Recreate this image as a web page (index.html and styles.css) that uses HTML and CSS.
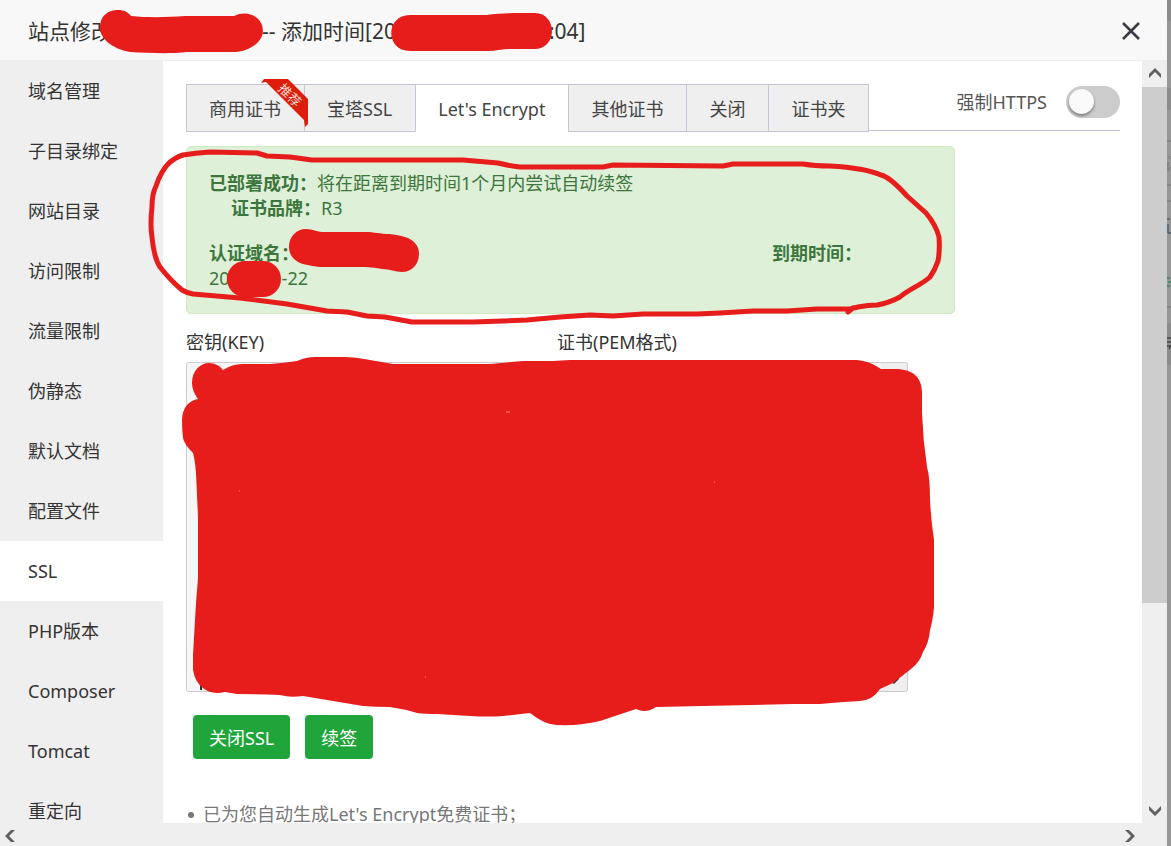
FILE: index.html
```html
<!DOCTYPE html>
<html lang="zh-CN">
<head>
    <meta charset="UTF-8">
    <meta name="viewport" content="width=device-width, initial-scale=1.0">
    <title>站点修改</title>
    <link rel="stylesheet" href="styles.css">
</head>
<body>
    <div class="dialog">
        <header class="dialog-header">
            <h1 class="dialog-title">站点修改<span class="hidden-domain"></span>-- 添加时间[20<span class="hidden-time"></span>:04]</h1>
            <button class="close" type="button" aria-label="关闭">
                <svg width="18" height="18" viewBox="0 0 18 18"><path d="M1 1L17 17M17 1L1 17" stroke="#3b3a48" stroke-width="2.6"/></svg>
            </button>
        </header>

        <div class="dialog-body">
            <nav class="side-menu">
                <a href="#">域名管理</a>
                <a href="#">子目录绑定</a>
                <a href="#">网站目录</a>
                <a href="#">访问限制</a>
                <a href="#">流量限制</a>
                <a href="#">伪静态</a>
                <a href="#">默认文档</a>
                <a href="#">配置文件</a>
                <a href="#" class="active">SSL</a>
                <a href="#">PHP版本</a>
                <a href="#">Composer</a>
                <a href="#">Tomcat</a>
                <a href="#">重定向</a>
            </nav>

            <main class="content">
                <div class="tabs">
                    <button class="tab" type="button">商用证书
                        <!-- 推荐角标 -->
                        <svg class="ribbon" width="48" height="50" viewBox="0 0 48 50">
                            <path d="M0 5L3 1H27L47 21V46L44 49L43 42L5 4Z" fill="#dc1e0a"/>
                            <text x="29" y="22" transform="rotate(45 29 17)" text-anchor="middle">推荐</text>
                        </svg>
                    </button>
                    <button class="tab" type="button">宝塔SSL</button>
                    <button class="tab active" type="button">Let's Encrypt</button>
                    <button class="tab" type="button">其他证书</button>
                    <button class="tab" type="button">关闭</button>
                    <button class="tab" type="button">证书夹</button>
                    <label class="force-https">强制HTTPS
                        <input type="checkbox" class="switch">
                    </label>
                </div>

                <div class="alert">
                    <p><b>已部署成功：</b>将在距离到期时间1个月内尝试自动续签</p>
                    <p class="brand"><b>证书品牌：</b>R3</p>
                    <p class="cert-row"><b>认证域名：</b><b class="expire">到期时间：</b></p>
                    <p>20<span class="hidden-date"></span>-22</p>
                </div>

                <div class="keys">
                    <div class="key-field">
                        <label for="key">密钥(KEY)</label>
                        <textarea id="key" readonly></textarea>
                    </div>
                    <div class="key-field">
                        <label for="pem">证书(PEM格式)</label>
                        <textarea id="pem" readonly></textarea>
                    </div>
                </div>

                <div class="actions">
                    <button class="btn" type="button">关闭SSL</button>
                    <button class="btn" type="button">续签</button>
                </div>

                <ul class="help">
                    <li>已为您自动生成Let's Encrypt免费证书；</li>
                </ul>
            </main>

            <div class="scroll-y">
                <svg class="arrow" width="25" height="26" viewBox="0 0 25 26"><path d="M7 13L13 7L19 13V17L13 11L7 17Z" fill="#606060"/></svg>
                <div class="thumb"></div>
                <div class="track"></div>
                <svg class="arrow" width="25" height="26" viewBox="0 0 25 26"><path d="M7 9L13 15L19 9V13L13 19L7 13Z" fill="#606060"/></svg>
            </div>
        </div>

        <div class="scroll-x">
            <svg width="18" height="23" viewBox="0 0 18 23"><path d="M11 7H15L9 13L15 19H11L5 13Z" fill="#606060"/></svg>
            <svg width="18" height="23" viewBox="0 0 18 23"><path d="M1 7H5L11 13L5 19H1L7 13Z" fill="#606060"/></svg>
        </div>
    </div>

    <!-- 遮罩下露出的页面边缘 -->
    <div class="backdrop">
        <svg width="4" height="846" viewBox="0 0 4 846">
            <path d="M0 0H4V21H0ZM0 88H4V110H0ZM0 323H4V365H0Z" fill="#8b8b8b"/>
            <path d="M0 141H4M0 185H4M0 201H4M0 307H4" stroke="#777"/>
            <path d="M1 156L4 159M1 171L4 167M1 162V171" stroke="#777" fill="none"/>
            <path d="M0 219H3M1 224V233H4" stroke="#28465a" fill="none"/>
            <path d="M0 278H3M1 282H4M0 286H3" stroke="#087b42"/>
            <path d="M0 338H4M0 342H4M0 346H4L2 349" stroke="#222" fill="none"/>
        </svg>
    </div>

    <!-- 手绘标记 -->
    <svg class="marks" width="1171" height="846" viewBox="0 0 1171 846">
        <path class="caret" d="M200 684H202V690H200Z"/>
        <path class="caret" d="M891 682L894 684L899 679V676Z"/>
        <path d="M100 28C100 15 109 10 118 10C124 10 128 12 131 16C150 18 170 17 185 16L234 16C242 12 251 13 257 18C263 23 264 31 262 36C258 46 245 52 235 52L187 52C170 54 150 53 130 52C112 49 100 38 100 28Z"/>
        <path d="M410 15L487 15C500 13 515 13 535 13C546 13 552 22 552 31C552 42 544 49 535 49L510 49C502 49 495 51 488 51L410 51C385 51 385 15 410 15Z"/>
        <path d="M306 229C313 229 317 232 322 232L365 232C375 232 380 234 390 234C398 235 402 236 408 238C416 242 419 247 419 254C419 265 411 272 402 272C395 272 390 269 382 269C370 267 365 267 358 267L320 267C312 266 308 265 303 264C293 261 289 254 289 247C289 236 297 229 306 229Z"/>
        <rect x="227" y="261" width="54" height="36" rx="18"/>
        <path d="M192 383C192 371 200 363 209 363C215 363 220 366 223 370Q232 364 242 364L270 364Q285 363 297 361Q306 357 315 357L343 357Q355 357 370 360L393 364L490 364L523 361L553 361L570 360L857 360Q870 361 881 369L897 369C914 370 922 378 922 393L922 413Q923 440 927 467Q930 477 930 500Q931 520 934 540V607Q933 620 930 630Q929 643 923 652Q920 662 911 669L893 683L880 689Q873 700 860 701Q840 702 820 704L793 704L703 706L656 707Q646 714 636 709L600 721Q580 726 557 725Q545 725 530 713L503 716Q487 717 470 716L437 714Q425 714 417 713Q404 709 390 707Q376 707 363 706L303 696Q290 698 280 695Q260 694 237 694L225 692Q211 695 203 688Q195 682 193 670L193 655L195 620Q196 600 198 578V517L196 473Q195 460 193 453Q184 444 183 438Q182 430 182 420C182 407 190 400 198 399Q192 391 192 383Z"/>
        <path class="circle" d="M853 308L848 312M858 307Q868 305 877 305Q889 303 900 297C909 289 920 286 930 277Q935 270 938 261Q940 250 939 237Q936 225 926 213Q917 205 907 196Q890 177 881 175Q865 168 830 166Q815 166 803 164L733 164L723 166L613 165L603 167L520 167Q510 166 498 163L463 160L312 160L290 157L267 156L257 153L210 152Q195 153 183 155Q176 157 169 163Q161 171 156 186Q152 194 152 207Q150 225 152 237Q154 258 160 267Q171 281 182 290Q187 293 193 294L240 298L287 304L327 311L347 312L367 316L385 317L412 322L473 322L527 320L560 317L590 315L613 316L643 314L697 314L720 313L753 311L787 311L817 309L850 309L858 307"/>
        <path class="gap" d="M506 412H510M239 491H240M714 482H715M425 677H426"/>
    </svg>
</body>
</html>
```
FILE: styles.css
```css
* {
    margin: 0;
    padding: 0;
    box-sizing: border-box;
}
body {
    position: relative;
    display: flex;
    height: 100vh;
    overflow: hidden;
    font-family: "Noto Sans", "Noto Sans CJK SC", sans-serif;
    font-size: 18px;
    line-height: 25px;
    color: #333;
}
button,
textarea {
    font: inherit;
    color: inherit;
}
.dialog {
    flex: 1;
    min-width: 0;
    display: flex;
    flex-direction: column;
    background: #fff;
}
.dialog-header {
    flex: none;
    display: flex;
    align-items: center;
    justify-content: space-between;
    height: 61px;
    padding: 2px 27px 0 28px;
    background: #f8f8f8;
    border-bottom: 1px solid #eee;
}
.dialog-title {
    font-size: 21px;
    font-weight: normal;
    white-space: pre;
}
.hidden-domain,
.hidden-time,
.hidden-date {
    display: inline-block;
}
.hidden-domain {
    width: 150px;
}
.hidden-time {
    width: 153px;
}
.hidden-date {
    width: 52px;
}
.close {
    display: flex;
    border: none;
    background: none;
    cursor: pointer;
}
.dialog-body {
    flex: 1;
    min-height: 0;
    display: flex;
}

/* 左侧菜单 */
.side-menu {
    flex: none;
    width: 163px;
    overflow: hidden;
    background: #efefef;
}
.side-menu a {
    display: block;
    padding-left: 28px;
    line-height: 60px;
    color: #333;
    text-decoration: none;
}
.side-menu .active {
    background: #fff;
}

.content {
    flex: 1;
    min-width: 0;
    overflow: hidden;
    padding: 23px 22px 0 23px;
}

/* 证书标签 */
.tabs {
    display: flex;
    height: 47px;
    border-bottom: 1px solid #c8c4d8;
}
.tab {
    position: relative;
    flex: none;
    height: 48px;
    padding: 2px 23px 0 22px;
    border: 1px solid #c8c4d8;
    border-right: none;
    background: #efefef;
    color: #444;
    cursor: pointer;
}
.tab:nth-child(6) {
    border-right: 1px solid #c8c4d8;
}
.tab.active {
    background: #fff;
    border-bottom-color: #fff;
}
.ribbon {
    position: absolute;
    top: -7px;
    right: -5px;
    z-index: 1;
}
.ribbon text {
    font-size: 13px;
    fill: #ffd9d2;
}
.force-https {
    display: flex;
    align-items: center;
    gap: 19px;
    height: 36px;
    margin-left: auto;
    color: #555;
}
.switch {
    appearance: none;
    width: 54px;
    height: 32px;
    padding: 3px;
    border-radius: 16px;
    background: #ccc;
    cursor: pointer;
}
.switch::before {
    content: "";
    display: block;
    width: 25px;
    height: 25px;
    border-radius: 50%;
    background: #fafafa;
    box-shadow: 0 2px 3px rgba(0, 0, 0, 0.4);
}

/* 部署状态 */
.alert {
    max-width: 769px;
    margin-top: 15px;
    padding: 24px 22px 22px;
    border: 1px solid #d0e9c0;
    border-radius: 5px;
    background: #dff0d8;
    color: #3c763d;
}
.brand {
    padding-left: 22px;
}
.cert-row {
    display: flex;
    justify-content: space-between;
    margin-top: 20px;
}
.expire {
    padding-right: 70px;
}

.keys {
    display: flex;
    gap: 20px;
    max-width: 722px;
    margin-top: 16px;
}
.key-field {
    flex: 1;
    display: flex;
    flex-direction: column;
    gap: 7px;
}
.key-field textarea {
    height: 330px;
    border: 1px solid #ccc;
    border-radius: 3px;
    background: #f6f6f6;
    resize: none;
}
#pem {
    background: linear-gradient(to left, #efefef 26px, #f6f6f6 26px);
}

.actions {
    display: flex;
    gap: 15px;
    padding: 23px 7px 0;
}
.btn {
    height: 44px;
    padding: 2px 16px 0;
    border: none;
    border-radius: 4px;
    background: #20a53a;
    color: #fff;
    cursor: pointer;
}
.help {
    margin-top: 43px;
    padding-left: 2px;
    color: #777;
    list-style: none;
}
.help li {
    display: flex;
    align-items: center;
    gap: 9px;
}
.help li::before {
    content: "";
    width: 6px;
    height: 6px;
    border-radius: 50%;
    background: #777;
}

/* 滚动条 */
.scroll-y {
    flex: none;
    display: flex;
    flex-direction: column;
    width: 25px;
    background: #efefef;
}
.arrow {
    flex: none;
}
.thumb {
    flex: 516;
    background: #cdcdcd;
}
.track {
    flex: 194;
}
.scroll-x {
    flex: none;
    display: flex;
    justify-content: space-between;
    height: 23px;
    padding-right: 25px;
    background: #efefef;
}
.backdrop {
    flex: none;
    width: 4px;
    overflow: hidden;
    background: #969696;
}

.marks {
    position: absolute;
    top: 0;
    left: 0;
    fill: #e71d1c;
    pointer-events: none;
}
.marks .caret {
    fill: #333;
}
.marks .circle {
    fill: none;
    stroke: #e71d1c;
    stroke-width: 5;
    stroke-linecap: round;
    stroke-linejoin: round;
}
.marks .gap {
    stroke: #f08a80;
}
```
